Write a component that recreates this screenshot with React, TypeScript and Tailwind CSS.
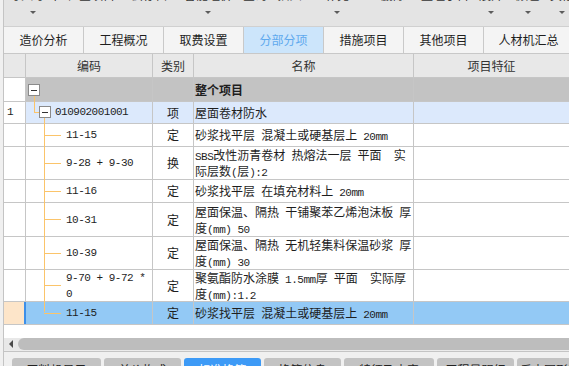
import React from 'react';

const MONO = "font-['Liberation_Mono',monospace] text-[11px] tracking-[-0.5px]";
const LINE = 'border-[#c6c6c6]';
const ORANGE = 'bg-[#fbc46a]';

function Mixed({ s }: { s: string }) {
  const parts = s.split(/([\x20-\x7E]+)/).filter((p) => p.length);
  return (
    <>
      {parts.map((p, i) =>
        /^[\x20-\x7E]+$/.test(p) ? (
          <span key={i} className={MONO}>
            {p}
          </span>
        ) : (
          <span key={i}>{p}</span>
        )
      )}
    </>
  );
}

function Box({ pos }: { pos: string }) {
  return (
    <span className={`absolute w-[12px] h-[12px] border border-[#8a8a8a] bg-white flex items-center justify-center ${pos}`}>
      <span className="w-[6px] h-[1px] bg-[#333]" />
    </span>
  );
}

function Arrow() {
  return <span className="block w-0 h-0 border-l-[3px] border-r-[3px] border-t-[3px] border-l-transparent border-r-transparent border-t-[#5c5c5c]" />;
}

const toolbar = [
  { w: 'w-[58px]', t: '导入导出', a: true },
  { w: 'w-[58px]', t: '检查项目', a: false },
  { w: 'w-[58px]', t: '云存档', a: false },
  { w: 'w-[60px]', t: '智能组价', a: true },
  { w: 'w-[34px]', t: '查询', a: false },
  { w: 'w-[35px]', t: '插入', a: false },
  { w: 'w-[60px]', t: '补充', a: true },
  { w: 'w-[52px]', t: '删除', a: false },
  { w: 'w-[52px]', t: '整理子目', a: false },
  { w: 'w-[40px]', t: '展开', a: true },
  { w: 'w-[34px]', t: '颜色', a: true },
  { w: 'w-[34px]', t: '其他', a: true },
];

const tabs = ['造价分析', '工程概况', '取费设置', '分部分项', '措施项目', '其他项目', '人材机汇总'];

type Row = { code: string[]; cat: string; name: string[]; h: string; half: string; last?: boolean };

const rows: Row[] = [
  { code: ['11-15'], cat: '定', name: ['砂浆找平层 混凝土或硬基层上 20mm'], h: 'h-[23px]', half: 'h-[11px]' },
  { code: ['9-28 + 9-30'], cat: '换', name: ['SBS改性沥青卷材 热熔法一层 平面  实', '际层数(层):2'], h: 'h-[33px]', half: 'h-[16px]' },
  { code: ['11-16'], cat: '定', name: ['砂浆找平层 在填充材料上 20mm'], h: 'h-[23px]', half: 'h-[11px]' },
  { code: ['10-31'], cat: '定', name: ['屋面保温、隔热 干铺聚苯乙烯泡沫板 厚', '度(mm) 50'], h: 'h-[34px]', half: 'h-[16px]' },
  { code: ['10-39'], cat: '定', name: ['屋面保温、隔热 无机轻集料保温砂浆 厚', '度(mm) 30'], h: 'h-[33px]', half: 'h-[16px]' },
  { code: ['9-70 + 9-72 *', '0'], cat: '定', name: ['聚氨酯防水涂膜 1.5mm厚 平面  实际厚', '度(mm):1.2'], h: 'h-[32px]', half: 'h-[15px]' },
  { code: ['11-15'], cat: '定', name: ['砂浆找平层 混凝土或硬基层上 20mm'], h: 'h-[23px]', half: 'h-[11px]', last: true },
];

const bottomTabs = [
  { w: 'w-[89px]', t: '工料机显示', on: false },
  { w: 'w-[77px]', t: '单价构成', on: false },
  { w: 'w-[77px]', t: '标准换算', on: true },
  { w: 'w-[77px]', t: '换算信息', on: false },
  { w: 'w-[90px]', t: '特征及内容', on: false },
  { w: 'w-[77px]', t: '工程量明细', on: false },
  { w: 'w-[90px]', t: '反查图形工程量', on: false },
];

export default function App() {
  return (
    <div className="w-[569px] h-[366px] overflow-hidden bg-[#f0f0f0] font-['Noto_Sans_CJK_SC',sans-serif] text-[12px] text-[#1e1e1e]">
      <div className="ml-[3px] h-full border-l border-[#c4c4c4] flex flex-col">
        {/* toolbar */}
        <div className="h-[27px] shrink-0 bg-[#e4e4e4] border-b border-[#d0d0d0] flex overflow-hidden">
          {toolbar.map((b, i) => (
            <div key={i} className={`${b.w} shrink-0 flex flex-col items-center`}>
              <div className="-mt-[12px] h-[14px] leading-[14px] whitespace-nowrap text-[#333]">{b.t}</div>
              {b.a && (
                <div className="mt-[9px]">
                  <Arrow />
                </div>
              )}
            </div>
          ))}
        </div>

        {/* tabs */}
        <div className="h-[27px] shrink-0 flex bg-[#f4f4f4] border-b border-[#c8c8c8] overflow-hidden">
          {tabs.map((t, i) => (
            <div
              key={t}
              className={`${i === 6 ? 'w-[90px]' : 'w-[80px]'} shrink-0 border-r border-[#c9c9c9] flex items-center justify-center text-[12px] ${
                i === 3 ? 'bg-[#cce5fb] text-[#5fa9ee]' : 'text-[#1e1e1e]'
              }`}
            >
              {t}
            </div>
          ))}
        </div>

        {/* table */}
        <div className="shrink-0 bg-white">
          {/* header */}
          <div className={`flex h-[24px] border-b ${LINE} bg-[#e8e8e8] text-[#333]`}>
            <div className={`w-[22px] shrink-0 border-r ${LINE}`} />
            <div className={`w-[127px] shrink-0 border-r ${LINE} flex items-center justify-center`}>编码</div>
            <div className={`w-[41px] shrink-0 border-r ${LINE} flex items-center justify-center`}>类别</div>
            <div className={`w-[220px] shrink-0 border-r ${LINE} flex items-center justify-center`}>名称</div>
            <div className="flex-1 flex items-center justify-center">项目特征</div>
          </div>

          {/* 整个项目 */}
          <div className={`flex h-[24px] border-b ${LINE}`}>
            <div className={`w-[22px] shrink-0 border-r ${LINE} bg-white`} />
            <div className={`relative w-[127px] shrink-0 border-r ${LINE} bg-[#c3c3c3]`}>
              <Box pos="left-[2px] top-[6px]" />
              <span className={`absolute left-[8px] top-[18px] bottom-[-1px] w-px ${ORANGE}`} />
            </div>
            <div className={`w-[41px] shrink-0 border-r ${LINE} bg-[#c3c3c3]`} />
            <div className={`w-[220px] shrink-0 border-r ${LINE} bg-[#c3c3c3] flex items-center pl-[1px] font-bold`}>整个项目</div>
            <div className="flex-1 bg-[#c3c3c3]" />
          </div>

          {/* row 1 */}
          <div className={`flex h-[22px] border-b ${LINE} bg-[#dce9fc]`}>
            <div className={`w-[22px] shrink-0 border-r ${LINE} bg-white flex items-center pl-[3px] ${MONO}`}>1</div>
            <div className={`relative w-[127px] shrink-0 border-r ${LINE} flex items-center pl-[29px] ${MONO}`}>
              <span className={`absolute left-[8px] top-[-1px] h-[12px] w-px ${ORANGE}`} />
              <span className={`absolute left-[8px] top-[10px] h-px w-[5px] ${ORANGE}`} />
              <Box pos="left-[13px] top-[4px]" />
              <span className={`absolute left-[18px] top-[16px] bottom-[-1px] w-px ${ORANGE}`} />
              010902001001
            </div>
            <div className={`w-[41px] shrink-0 border-r ${LINE} flex items-center justify-center`}>项</div>
            <div className={`w-[220px] shrink-0 border-r ${LINE} flex items-center pl-[1px]`}>屋面卷材防水</div>
            <div className="flex-1" />
          </div>

          {rows.map((r, i) => (
            <div key={i} className={`flex ${r.h} border-b ${LINE} ${r.last ? 'bg-[#93c9f5]' : 'bg-white'}`}>
              <div className={`shrink-0 ${r.last ? 'w-[22px] border-r-2 border-[#3d8fe8] bg-[#fde5c9]' : `w-[22px] border-r ${LINE} bg-white`}`} />
              <div className={`relative w-[127px] shrink-0 border-r ${LINE} flex flex-col justify-center pl-[40px] leading-[16px] whitespace-pre ${MONO}`}>
                {r.last ? (
                  <span className={`absolute left-[18px] top-[-1px] ${r.half} w-px ${ORANGE}`} />
                ) : (
                  <span className={`absolute left-[18px] top-[-1px] bottom-[-1px] w-px ${ORANGE}`} />
                )}
                <span className={`absolute left-[18px] w-[17px] h-px ${ORANGE} ${r.half === 'h-[11px]' ? 'top-[11px]' : r.half === 'h-[15px]' ? 'top-[15px]' : 'top-[16px]'}`} />
                {r.code.map((c, j) => (
                  <div key={j} className="h-[16px]">{c}</div>
                ))}
              </div>
              <div className={`w-[41px] shrink-0 border-r ${LINE} flex items-center justify-center`}>{r.cat}</div>
              <div className={`w-[220px] shrink-0 border-r ${LINE} flex flex-col justify-center pl-[1px] leading-[16px] whitespace-pre overflow-hidden`}>
                {r.name.map((n, j) => (
                  <div key={j} className="h-[16px] leading-[16px]">
                    <Mixed s={n} />
                  </div>
                ))}
              </div>
              <div className="flex-1" />
            </div>
          ))}

          <div className="h-[13px]" />
        </div>

        {/* scrollbar */}
        <div className="h-[12px] shrink-0 flex bg-[#e8e8e8]">
          <div className="w-[14px] shrink-0 flex items-center justify-center">
            <span className="block w-0 h-0 border-t-[4px] border-b-[4px] border-r-[4px] border-t-transparent border-b-transparent border-r-[#4a4a4a]" />
          </div>
          <div className="flex-1 rounded-l-[6px] bg-[#bdbdbd]" />
        </div>
        <div className="h-[1px] shrink-0 bg-[#ececec]" />
        <div className="h-[1px] shrink-0 bg-[#c4c4c4]" />

        {/* bottom tabs */}
        <div className="flex gap-[3px] pl-[8px] pt-[6px]">
          {bottomTabs.map((b) => (
            <div
              key={b.t}
              className={`${b.w} shrink-0 h-[22px] rounded-t-[3px] flex justify-center pt-[5px] leading-[14px] whitespace-nowrap ${
                b.on ? 'bg-[#3d9af6] text-white' : 'bg-[#c3c3c3] text-[#222]'
              }`}
            >
              {b.t}
            </div>
          ))}
        </div>
      </div>
    </div>
  );
}
